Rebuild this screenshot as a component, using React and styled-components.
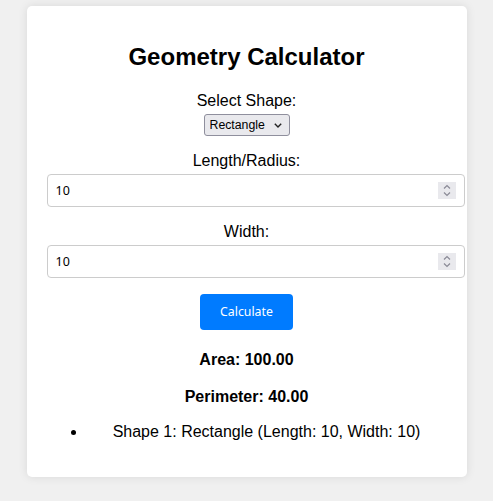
import React, { useState } from "react";
import styled, { createGlobalStyle } from "styled-components";

const GlobalStyle = createGlobalStyle`
  body {
    margin: 0;
    background: #f0f0f0;
    font-family: "Liberation Sans", Arial, sans-serif;
    color: #000;
  }
`;

const Page = styled.div`
  padding: 6px 0 24px;
`;

const Card = styled.div`
  width: 400px;
  margin: 0 auto;
  padding: 20px;
  background: #fff;
  border-radius: 5px;
  box-shadow: 0 0 10px rgba(0, 0, 0, 0.1);
  text-align: center;
`;

const Title = styled.h2`
  font-size: 24px;
  font-weight: bold;
  margin: 17px 0 21px;
`;

const Group = styled.div`
  display: flex;
  flex-direction: column;
  align-items: ${(p) => (p.$center ? "center" : "stretch")};
  margin-bottom: 16px;
`;

const Label = styled.label`
  display: block;
  font-size: 16px;
  margin-bottom: 4px;
`;

const SelectWrap = styled.div`
  position: relative;
  display: inline-flex;
`;

const Select = styled.select`
  appearance: none;
  height: 22px;
  width: 86px;
  padding: 0 0 0 5px;
  font-family: "Liberation Sans", Arial, sans-serif;
  font-size: 12.3px;
  color: #000;
  background: #e9e9ed;
  border: 1px solid #8f8f9d;
  border-radius: 3px;
`;

const Chevron = styled.svg`
  position: absolute;
  right: 8px;
  top: 9px;
  pointer-events: none;
`;

const InputWrap = styled.div`
  position: relative;
`;

const Input = styled.input`
  display: block;
  width: 100%;
  padding: 8px;
  line-height: 15px;
  font-family: "Noto Sans", sans-serif;
  font-size: 12.5px;
  color: #000;
  border: 1px solid #ccc;
  border-radius: 4px;
  outline: none;
`;

const Spinner = styled.span`
  position: absolute;
  right: -9px;
  top: 8px;
  width: 18px;
  height: 17px;
  background: #e9e9ed;
  display: flex;
  align-items: center;
  justify-content: center;
`;

const ButtonRow = styled.div`
  display: flex;
  justify-content: center;
`;

const Button = styled.button`
  padding: 10px 20px;
  line-height: 16px;
  font-family: "Noto Sans", sans-serif;
  font-size: 12.3px;
  color: #fff;
  background: #007bff;
  border: none;
  border-radius: 4px;
  cursor: pointer;
`;

const Result = styled.p`
  font-size: 16px;
  font-weight: bold;
  margin: ${(p) => p.$top}px 0 0;
`;

const List = styled.ul`
  margin: 16.6px 0 16px;
  padding-left: 40px;
  font-size: 16px;
`;

const SpinIcon = () => (
  <svg width="10" height="15" viewBox="0 0 10 15" fill="none" stroke="#8a8a96" strokeWidth="1.2">
    <path d="M2 5.5 L5 2.5 L8 5.5" />
    <path d="M2 9.5 L5 12.5 L8 9.5" />
  </svg>
);

function NumberField({ value, onChange }) {
  return (
    <InputWrap>
      <Input type="text" inputMode="numeric" value={value} onChange={(e) => onChange(e.target.value)} />
      <Spinner>
        <SpinIcon />
      </Spinner>
    </InputWrap>
  );
}

export default function App() {
  const [shape, setShape] = useState("Rectangle");
  const [length, setLength] = useState("10");
  const [width, setWidth] = useState("10");

  return (
    <Page>
      <GlobalStyle />
      <Card>
        <Title>Geometry Calculator</Title>
        <Group $center>
          <Label>Select Shape:</Label>
          <SelectWrap>
            <Select value={shape} onChange={(e) => setShape(e.target.value)}>
              <option>Rectangle</option>
              <option>Circle</option>
            </Select>
            <Chevron width="8" height="5" viewBox="0 0 8 5" fill="none" stroke="#222" strokeWidth="1.4">
              <path d="M0.8 0.8 L4 4 L7.2 0.8" />
            </Chevron>
          </SelectWrap>
        </Group>
        <Group>
          <Label>Length/Radius:</Label>
          <NumberField value={length} onChange={setLength} />
        </Group>
        <Group>
          <Label>Width:</Label>
          <NumberField value={width} onChange={setWidth} />
        </Group>
        <ButtonRow>
          <Button>Calculate</Button>
        </ButtonRow>
        <Result $top={20.5}>Area: 100.00</Result>
        <Result $top={19.6}>Perimeter: 40.00</Result>
        <List>
          <li>Shape 1: Rectangle (Length: 10, Width: 10)</li>
        </List>
      </Card>
    </Page>
  );
}
